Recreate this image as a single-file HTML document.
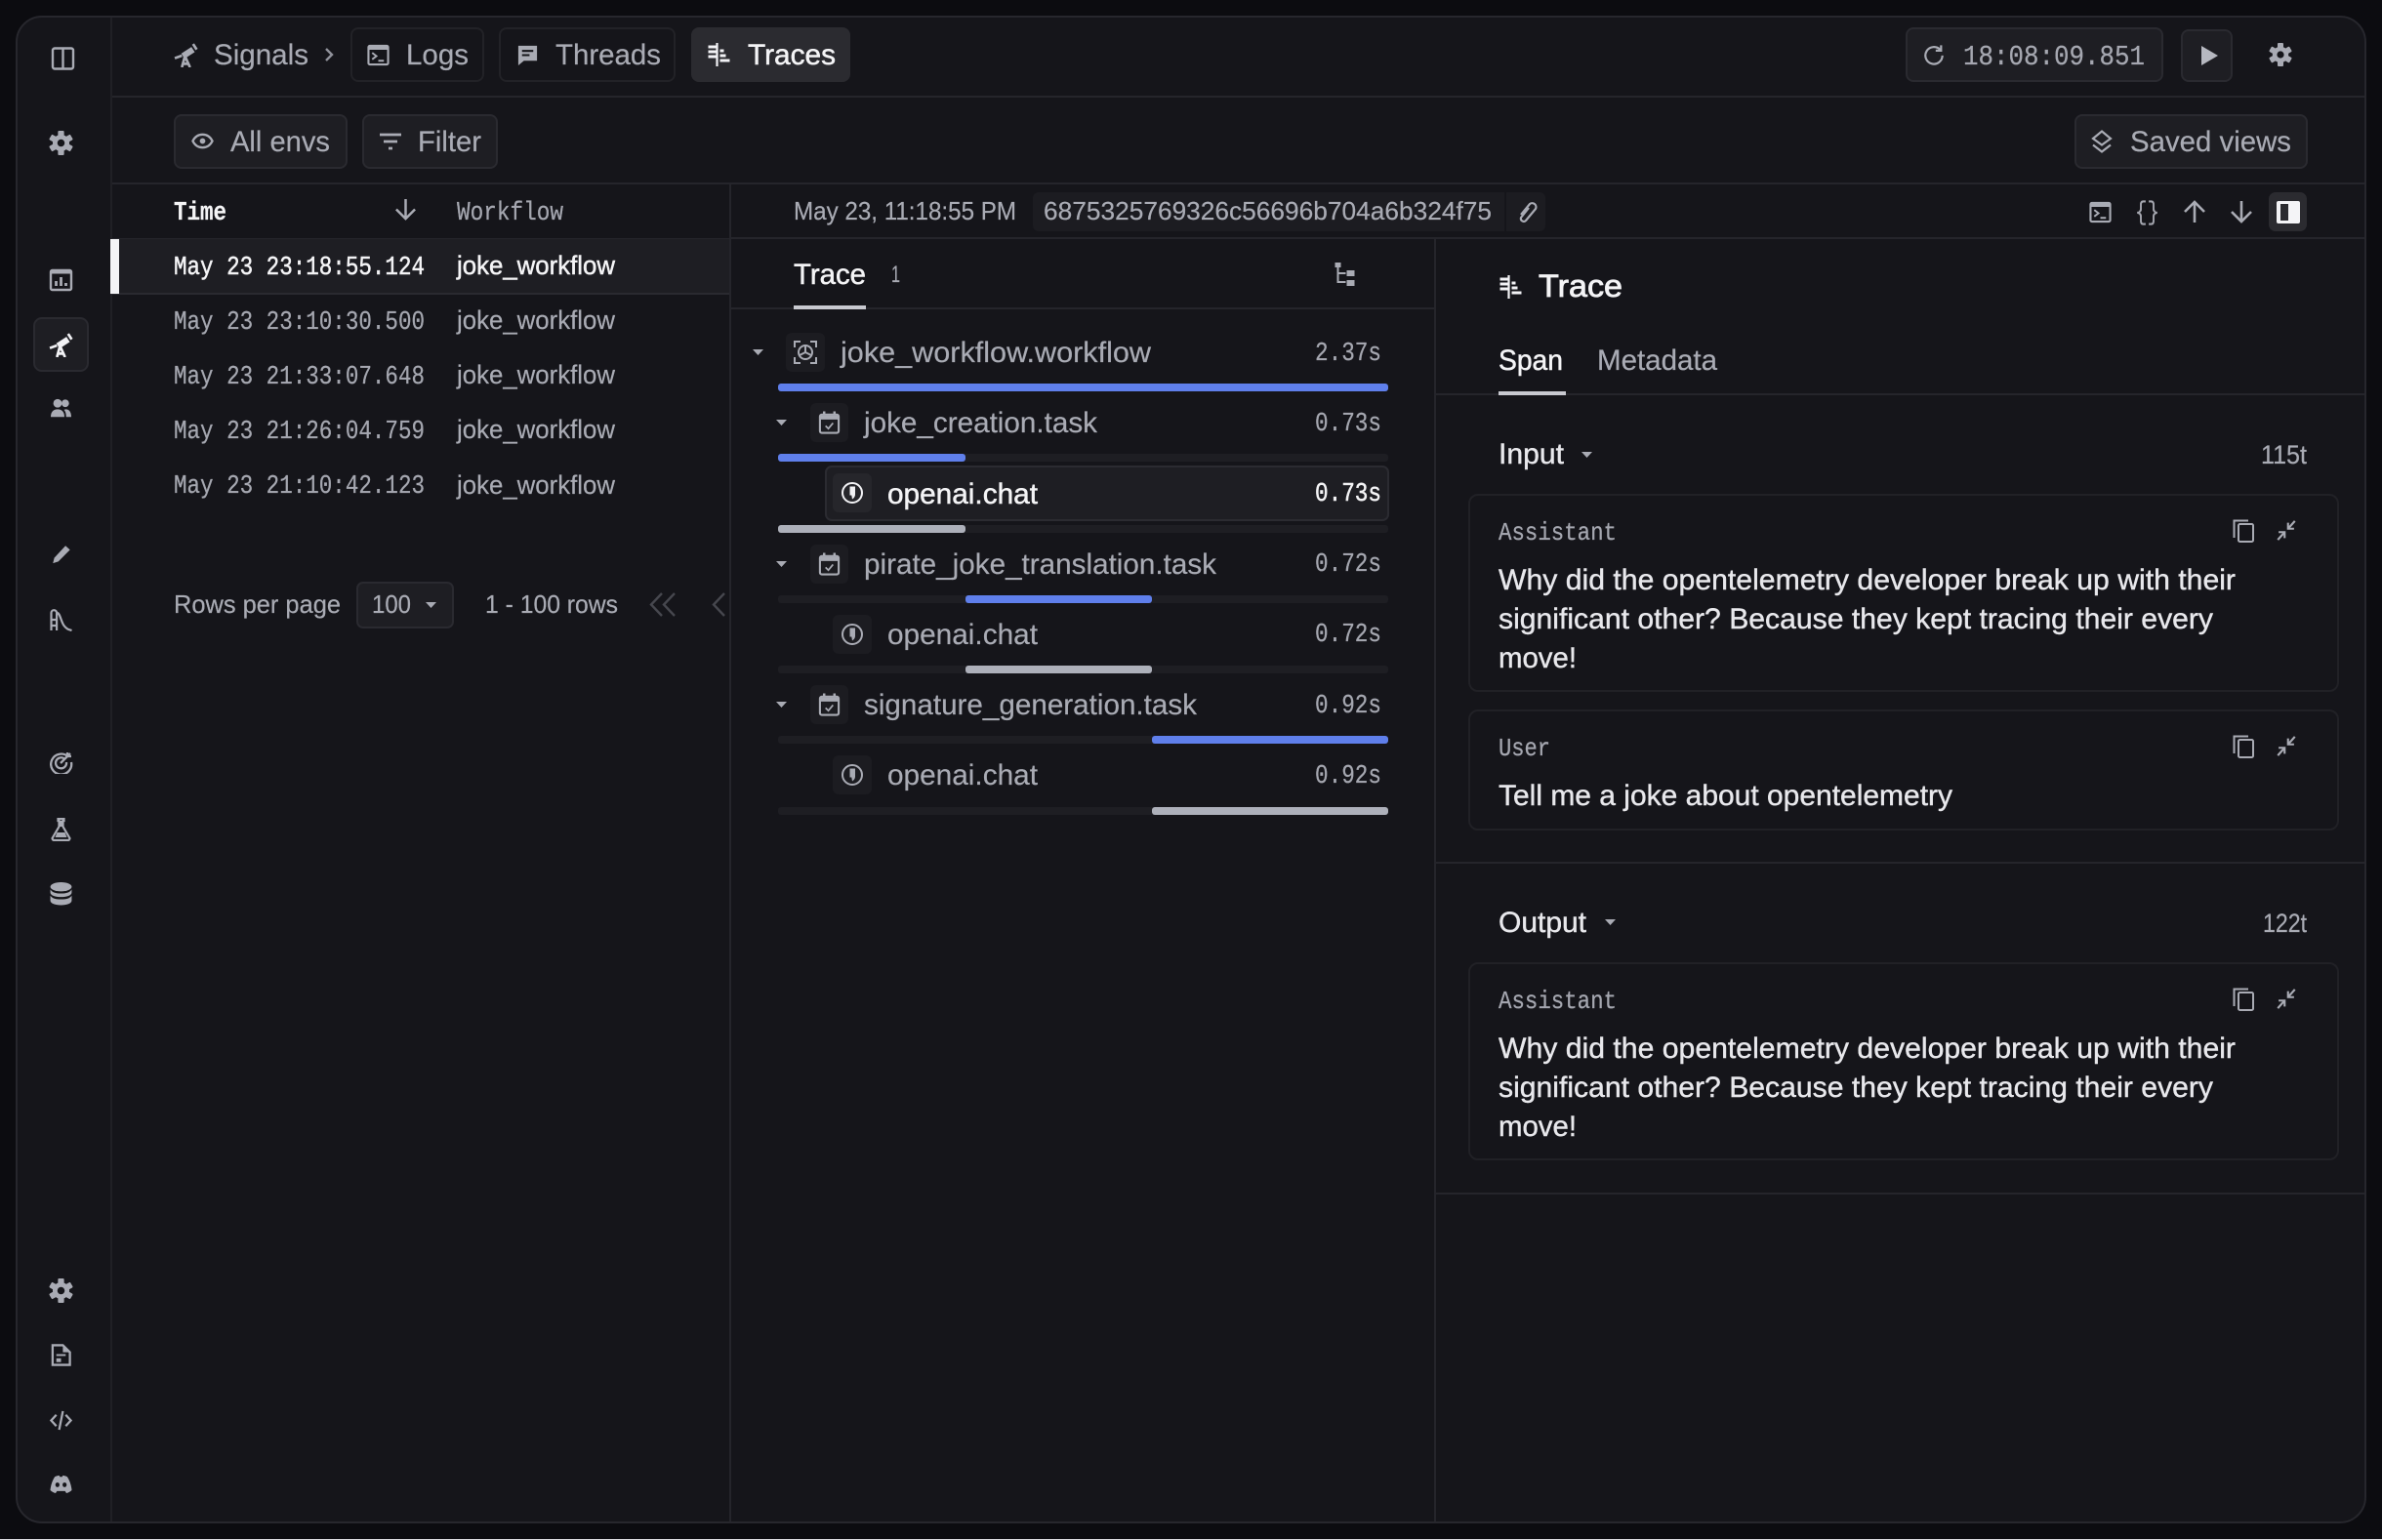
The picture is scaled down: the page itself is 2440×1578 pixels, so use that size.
<!DOCTYPE html>
<html lang="en">
<head>
<meta charset="utf-8">
<title>Traces</title>
<style>
html,body{margin:0;padding:0;background:#0c0c10;width:2440px;height:1578px;overflow:hidden}
svg{display:block}
text{white-space:pre}
.s{font-family:"Liberation Sans",sans-serif;font-size:30px;fill:#a9abb4;stroke:#a9abb4;stroke-width:.2px}
.m{font-family:"Liberation Mono",monospace;font-size:27px;fill:#a5a7b0;stroke:#a5a7b0;stroke-width:.25px}
.w{fill:#f4f4f6;stroke:#f4f4f6}
.s.w,.m.w{stroke:#f4f4f6}
.med{stroke:currentColor;stroke-width:.5px}
.msg{font-family:"Liberation Sans",sans-serif;font-size:30px;fill:#e8e8ec;stroke:#e8e8ec;stroke-width:.4px}
.ln{fill:#25252b}
.btn{fill:#1e1e23;stroke:#2a2a30;stroke-width:2}
.btn0{fill:#15151a;stroke:#222227;stroke-width:2}
.card{fill:#15151a;stroke:#212126;stroke-width:2}
.ic{fill:#1c1c21}
.trk{fill:#1e1e23}
.blu{fill:#5f7feb}
.gry{fill:#adb0ba}
.i{color:#a9abb4}
.iw{color:#f2f2f5}
</style>
</head>
<body>
<svg xmlns="http://www.w3.org/2000/svg" width="2440" height="1578" viewBox="0 0 2440 1578">
<defs>
<symbol id="gear" viewBox="0 0 24 24">
  <g fill="currentColor">
    <circle cx="12" cy="12" r="8.2"/>
    <rect x="9" y="0" width="6" height="5" rx="1"/>
    <rect x="9" y="19" width="6" height="5" rx="1"/>
    <rect x="9" y="0" width="6" height="5" rx="1" transform="rotate(60 12 12)"/>
    <rect x="9" y="19" width="6" height="5" rx="1" transform="rotate(60 12 12)"/>
    <rect x="9" y="0" width="6" height="5" rx="1" transform="rotate(120 12 12)"/>
    <rect x="9" y="19" width="6" height="5" rx="1" transform="rotate(120 12 12)"/>
  </g>
  <circle cx="12" cy="12" r="3.6" fill="#15151a"/>
</symbol>
<symbol id="panel" viewBox="0 0 24 24">
  <rect x="1.5" y="1.5" width="21" height="21" rx="2" fill="none" stroke="currentColor" stroke-width="2.4"/>
  <path d="M12 2v20" stroke="currentColor" stroke-width="2.4"/>
</symbol>
<symbol id="chart" viewBox="0 0 24 24">
  <rect x="1.5" y="2" width="21" height="20" rx="1.5" fill="none" stroke="currentColor" stroke-width="2.4"/>
  <path d="M2 4h20" stroke="currentColor" stroke-width="3"/>
  <path d="M7 18v-5M12 18V9M17 18v-3" stroke="currentColor" stroke-width="2.8"/>
</symbol>
<symbol id="scope" viewBox="0 0 24 24">
  <path d="M9 13 19 6.500" stroke="currentColor" stroke-width="6" fill="none"/>
  <path d="M19 1l3.500 5.500M1 15l7-2.500" stroke="currentColor" stroke-width="2.600" fill="none"/>
  <path d="M11 13 8 24M11 13l5 11M8.500 20.500h6" stroke="currentColor" stroke-width="2.600" fill="none"/>
</symbol>
<symbol id="people" viewBox="0 0 24 24" fill="currentColor">
  <circle cx="8" cy="6" r="5"/>
  <circle cx="17" cy="6" r="4.4"/>
  <path d="M0 22c0-6 3-9 8-9s8 3 8 9z"/>
  <path d="M17.500 13c4 0 6.500 3 6.500 9h-6c0-4-.500-6-2.500-8.500z"/>
</symbol>
<symbol id="pencil" viewBox="0 0 24 24">
  <path d="M3 22l1.500-6L17 2.500l5 4.500L9 20z" fill="currentColor"/>
</symbol>
<symbol id="ladder" viewBox="0 0 24 24">
  <path d="M2 23V5a2.800 2.800 0 0 1 5.600 0V23M2 12h5.600M2 18h5.600M8 5c3 0 4 9 7 13s5 4 8 5" fill="none" stroke="currentColor" stroke-width="2.200"/>
</symbol>
<symbol id="target" viewBox="0 0 24 24" fill="none" stroke="currentColor" stroke-width="2.300">
  <path d="M19 6.500A10.500 10.500 0 1 0 22 12"/>
  <path d="M15 8.500A5.500 5.500 0 1 0 17 12"/>
  <path d="M11 13 21 3M18 2v4h4"/>
</symbol>
<symbol id="flask" viewBox="0 0 24 24">
  <path d="M9 1h6v2h-1v6l7 12a2 2 0 0 1-2 2H5a2 2 0 0 1-2-2l7-12V3H9z" fill="none" stroke="currentColor" stroke-width="2.200"/>
  <path d="M8 15h8l2 5H6z" fill="currentColor"/>
  <path d="M10 3h4v6h-4z" fill="currentColor"/>
</symbol>
<symbol id="db" viewBox="0 0 24 24" fill="currentColor">
  <ellipse cx="12" cy="5.500" rx="10.500" ry="4.500"/>
  <path d="M1.500 8c2 3 5 4 10.500 4s8.500-1 10.500-4v3c0 3-5 4.500-10.500 4.500S1.500 14 1.500 11z"/>
  <path d="M1.500 14c2 3 5 3.800 10.500 3.800S20.500 17 22.500 14v5c0 3-5 4.500-10.500 4.500S1.500 22 1.500 19z"/>
</symbol>
<symbol id="doc" viewBox="0 0 24 24">
  <path d="M3 1.500h11l7.500 7.500v13.500H3z" fill="none" stroke="currentColor" stroke-width="2.400"/>
  <path d="M14 1.500V9h7.500z" fill="currentColor"/>
  <path d="M7 12h10" stroke="currentColor" stroke-width="2"/>
  <rect x="7" y="15.500" width="5" height="4" fill="currentColor"/>
</symbol>
<symbol id="code" viewBox="0 0 24 24" fill="none" stroke="currentColor" stroke-width="2.400">
  <path d="M7 6 1.500 12 7 18M17 6l5.500 6L17 18M14 2 10 22"/>
</symbol>
<symbol id="discord" viewBox="0 0 24 24">
  <path d="M5 3.500c2-1 4-1.500 5-1.500l.6 1.500h2.800L14 2c1 0 3 .5 5 1.500 2.500 4 4.500 9 5 15-1.500 1.500-4 3-6 3.300l-1.500-2.300H7.500L6 21.800c-2-.3-4.500-1.800-6-3.300.5-6 2.500-11 5-15z" fill="currentColor"/>
  <ellipse cx="8" cy="12.500" rx="2.300" ry="2.600" fill="#15151a"/>
  <ellipse cx="16" cy="12.500" rx="2.300" ry="2.600" fill="#15151a"/>
</symbol>
<symbol id="term" viewBox="0 0 24 24">
  <rect x="1.500" y="2" width="21" height="20" rx="1.500" fill="none" stroke="currentColor" stroke-width="2.200"/>
  <path d="M2 4.500h20" stroke="currentColor" stroke-width="3.400"/>
  <path d="M5.500 9.500 10 13l-4.500 3.500M12 18h6" fill="none" stroke="currentColor" stroke-width="2"/>
</symbol>
<symbol id="chat" viewBox="0 0 24 24">
  <path d="M2 2h20v16H8l-6 5z" fill="currentColor"/>
  <path d="M6 7.500h12M6 12h8" stroke="#15151a" stroke-width="2.200"/>
</symbol>
<symbol id="trace" viewBox="0 0 24 24">
  <path d="M10 0v24" stroke="currentColor" stroke-width="2.200"/>
  <path d="M1 4h9M1 9h9M1 14h9M13 8h4M13 13h6M13 18h10" stroke="currentColor" stroke-width="3" fill="none"/>
</symbol>
<symbol id="eye" viewBox="0 0 24 24">
  <path d="M1.500 12C4 7 8 5 12 5s8 2 10.500 7C20 17 16 19 12 19s-8-2-10.500-7z" fill="none" stroke="currentColor" stroke-width="2.400"/>
  <circle cx="12" cy="12" r="3" fill="currentColor"/>
</symbol>
<symbol id="filter" viewBox="0 0 24 24">
  <path d="M1 5h22M5 12h14M10 19h4" stroke="currentColor" stroke-width="2.800"/>
</symbol>
<symbol id="refresh" viewBox="0 0 24 24" fill="none" stroke="currentColor" stroke-width="2.400">
  <path d="M19 6.500A9.500 9.500 0 1 0 21.500 13"/>
  <path d="M20 1.500v6h-6" />
</symbol>
<symbol id="layers" viewBox="0 0 24 24" fill="none" stroke="currentColor" stroke-width="2.200">
  <path d="M12 1.500 21 9l-9 6.500L3 9z"/>
  <path d="M3 15.500l9 7 9-7"/>
</symbol>
<symbol id="link" viewBox="0 0 24 24" fill="none" stroke="currentColor" stroke-width="2.200">
  <path d="M6 14 15 3a4 4 0 0 1 6 5L11 20a3 3 0 0 1-5-3l8-10"/>
</symbol>
<symbol id="up" viewBox="0 0 24 24" fill="none" stroke="currentColor" stroke-width="2.600">
  <path d="M12 23V2M2 12 12 2l10 10"/>
</symbol>
<symbol id="down" viewBox="0 0 24 24" fill="none" stroke="currentColor" stroke-width="2.600">
  <path d="M12 1v21M2 12l10 10 10-10"/>
</symbol>
<symbol id="tree" viewBox="0 0 24 24">
  <rect x="2" y="0" width="6" height="5" fill="currentColor"/>
  <path d="M5 5v15h8M5 11h8" stroke="currentColor" stroke-width="2" fill="none"/>
  <rect x="14" y="8" width="8" height="6" fill="currentColor"/>
  <rect x="14" y="18" width="8" height="6" fill="currentColor"/>
</symbol>
<symbol id="wf" viewBox="0 0 24 24" fill="none" stroke="currentColor" stroke-width="2">
  <path d="M1 7V1h6M17 1h6v6M1 17v6h6M17 23h6v-6"/>
  <circle cx="12" cy="12" r="7"/>
  <path d="M12 12V5M12 12l-6 3M12 12l6 3"/>
</symbol>
<symbol id="task" viewBox="0 0 24 24">
  <rect x="2" y="3.500" width="20" height="19.500" rx="2" fill="none" stroke="currentColor" stroke-width="2.200"/>
  <path d="M2 6.500h20" stroke="currentColor" stroke-width="4.500"/>
  <path d="M6.500 0v4M17.500 0v4" stroke="currentColor" stroke-width="2.600"/>
  <path d="M8 15.500l3 3 5-6" fill="none" stroke="currentColor" stroke-width="1.800"/>
</symbol>
<symbol id="oai" viewBox="0 0 24 24">
  <circle cx="12" cy="12" r="10" fill="none" stroke="currentColor" stroke-width="2"/>
  <path d="M9.500 5.500h5.500v8c0 2.500-1.500 4-3 5l-.7-4H9.500z" fill="currentColor"/>
</symbol>
<symbol id="copy" viewBox="0 0 22 24" fill="none" stroke="currentColor" stroke-width="2">
  <rect x="6" y="5" width="15" height="18" rx="1.500"/>
  <path d="M1.500 19V1.500H16"/>
</symbol>
<symbol id="shrink" viewBox="0 0 24 24" fill="none" stroke="currentColor" stroke-width="2.400">
  <path d="M22 1 14 10M14 3v7h7M2 23l8-9M10 21v-7H3"/>
</symbol>
<path id="caret" d="M0 0h11l-5.500 6z" fill="#a9abb4"/>
</defs>

<rect width="2440" height="1578" fill="#0c0c10"/>
<rect x="0" y="1577" width="2440" height="1" fill="#dcdce0"/>

<!-- main panel -->
<rect x="17" y="17" width="2406" height="1543" rx="26" fill="#15151a" stroke="#27272d" stroke-width="2"/>
<rect class="ln" x="113" y="18" width="2" height="1541" opacity=".7"/>
<rect class="ln" x="115" y="98" width="2307" height="2"/>
<rect class="ln" x="115" y="187" width="2307" height="2"/>
<rect class="ln" x="747" y="189" width="2" height="1370"/>
<rect class="ln" x="749" y="243" width="1673" height="2"/>
<rect class="ln" x="115" y="244" width="632" height="2"/>
<rect class="ln" x="1469" y="245" width="2" height="1314"/>
<rect class="ln" x="749" y="315" width="720" height="2"/>
<rect class="ln" x="1471" y="403" width="951" height="2"/>
<rect class="ln" x="1471" y="883" width="951" height="2"/>
<rect class="ln" x="1471" y="1222" width="951" height="2"/>

<!-- sidebar -->
<use class="i" href="#panel" x="52" y="48" width="25" height="24"/>
<use class="i" href="#gear" x="50" y="134" width="25" height="25"/>
<use class="i" href="#chart" x="50" y="275" width="25" height="24"/>
<rect class="btn" x="35" y="326" width="55" height="54" rx="8"/>
<use class="iw" href="#scope" x="50" y="341" width="25" height="25"/>
<use class="i" href="#people" x="50" y="408" width="25" height="21"/>
<use class="i" href="#pencil" x="51" y="557" width="23" height="22"/>
<use class="i" href="#ladder" x="50" y="623" width="25" height="24"/>
<use class="i" href="#target" x="51" y="769" width="24" height="24"/>
<use class="i" href="#flask" x="50" y="838" width="25" height="24"/>
<use class="i" href="#db" x="50" y="903" width="25" height="25"/>
<use class="i" href="#gear" x="50" y="1310" width="25" height="25"/>
<use class="i" href="#doc" x="51" y="1376" width="23" height="25"/>
<use class="i" href="#code" x="50" y="1444" width="25" height="23"/>
<use class="i" href="#discord" x="50" y="1510" width="25" height="22"/>

<!-- top bar -->
<use class="i" href="#scope" x="178" y="44" width="25" height="25"/>
<text class="s" x="219" y="66" textLength="97" lengthAdjust="spacingAndGlyphs">Signals</text>
<path d="M334 50l6 6-6 6" fill="none" stroke="#8f919a" stroke-width="2.400"/>
<rect class="btn0" x="360" y="29" width="135" height="54" rx="7"/>
<use class="i" href="#term" x="376" y="45" width="23" height="23"/>
<text class="s" x="416" y="66" textLength="64" lengthAdjust="spacingAndGlyphs">Logs</text>
<rect class="btn0" x="512" y="29" width="179" height="54" rx="7"/>
<use class="i" href="#chat" x="529" y="45" width="23" height="23"/>
<text class="s" x="569" y="66" textLength="108" lengthAdjust="spacingAndGlyphs">Threads</text>
<rect x="708" y="28" width="163" height="56" rx="8" fill="#2b2b30"/>
<use class="iw" href="#trace" x="724" y="44" width="25" height="24"/>
<text class="s w med" x="766" y="66" textLength="90" lengthAdjust="spacingAndGlyphs" style="color:#f4f4f6">Traces</text>

<rect class="btn" x="1953" y="29" width="262" height="54" rx="7"/>
<use class="i" href="#refresh" x="1970" y="45" width="22" height="22"/>
<text class="m" x="2011" y="66" style="font-size:29px" textLength="186" lengthAdjust="spacingAndGlyphs">18:08:09.851</text>
<rect class="btn" x="2235" y="31" width="51" height="52" rx="7"/>
<path d="M2255 47l17 10-17 10z" fill="#b6b8c0"/>
<use class="i" href="#gear" x="2324" y="44" width="24" height="24"/>

<!-- filter bar -->
<rect class="btn" x="179" y="118" width="176" height="54" rx="7"/>
<use class="i" href="#eye" x="196" y="133" width="23" height="23"/>
<text class="s" x="236" y="155" textLength="102" lengthAdjust="spacingAndGlyphs">All envs</text>
<rect class="btn" x="372" y="118" width="137" height="54" rx="7"/>
<use class="i" href="#filter" x="388" y="133" width="24" height="24"/>
<text class="s" x="428" y="155" textLength="65" lengthAdjust="spacingAndGlyphs">Filter</text>
<rect class="btn" x="2126" y="118" width="237" height="54" rx="7"/>
<use class="i" href="#layers" x="2141" y="133" width="24" height="24"/>
<text class="s" x="2182" y="155" textLength="165" lengthAdjust="spacingAndGlyphs">Saved views</text>

<!-- table -->
<text class="m w" x="178" y="225" style="font-weight:bold" textLength="54" lengthAdjust="spacingAndGlyphs">Time</text>
<use class="i" href="#down" x="404" y="203" width="23" height="23"/>
<text class="m" x="468" y="225" textLength="109" lengthAdjust="spacingAndGlyphs">Workflow</text>

<rect x="113" y="245" width="634" height="56" fill="#1e1e23"/>
<rect x="113" y="300" width="634" height="2" fill="#2a2a30"/>
<rect x="113" y="245" width="9" height="56" fill="#f4f4f6"/>
<text class="m w med" x="178" y="281" textLength="257" lengthAdjust="spacingAndGlyphs" style="color:#f4f4f6">May 23 23:18:55.124</text>
<text class="s w med" x="468" y="281" style="font-size:27px;color:#f4f4f6" textLength="162" lengthAdjust="spacingAndGlyphs">joke_workflow</text>

<text class="m" x="178" y="337" textLength="257" lengthAdjust="spacingAndGlyphs">May 23 23:10:30.500</text>
<text class="s" x="468" y="337" style="font-size:27px" textLength="162" lengthAdjust="spacingAndGlyphs">joke_workflow</text>
<text class="m" x="178" y="393" textLength="257" lengthAdjust="spacingAndGlyphs">May 23 21:33:07.648</text>
<text class="s" x="468" y="393" style="font-size:27px" textLength="162" lengthAdjust="spacingAndGlyphs">joke_workflow</text>
<text class="m" x="178" y="449" textLength="257" lengthAdjust="spacingAndGlyphs">May 23 21:26:04.759</text>
<text class="s" x="468" y="449" style="font-size:27px" textLength="162" lengthAdjust="spacingAndGlyphs">joke_workflow</text>
<text class="m" x="178" y="505" textLength="257" lengthAdjust="spacingAndGlyphs">May 23 21:10:42.123</text>
<text class="s" x="468" y="506" style="font-size:27px" textLength="162" lengthAdjust="spacingAndGlyphs">joke_workflow</text>

<!-- pagination -->
<text class="s" x="178" y="628" style="font-size:26px" textLength="171" lengthAdjust="spacingAndGlyphs">Rows per page</text>
<rect class="btn" x="366" y="597" width="98" height="46" rx="6"/>
<text class="s" x="381" y="628" style="font-size:26px" textLength="40" lengthAdjust="spacingAndGlyphs">100</text>
<use href="#caret" x="436" y="617"/>
<text class="s" x="497" y="628" style="font-size:26px" textLength="136" lengthAdjust="spacingAndGlyphs">1 - 100 rows</text>
<path d="M678 608l-11 11.500 11 11.500M691 608l-11 11.500 11 11.500M742 608l-11 11.500 11 11.500" fill="none" stroke="#46474e" stroke-width="2.400"/>

<!-- detail header -->
<text class="s" x="813" y="225" style="font-size:26px" textLength="228" lengthAdjust="spacingAndGlyphs">May 23, 11:18:55 PM</text>
<rect x="1058" y="197" width="525" height="40" rx="6" fill="#1c1c21"/>
<rect x="1541" y="197" width="2" height="40" fill="#15151a"/>
<text class="s" x="1069" y="225" style="font-size:26px" textLength="459" lengthAdjust="spacingAndGlyphs">6875325769326c56696b704a6b324f75</text>
<use class="i" href="#link" x="1552" y="206" width="24" height="24"/>
<use class="i" href="#term" x="2140" y="206" width="23" height="23"/>
<text class="m" x="2187" y="225" style="font-size:27px" textLength="25" lengthAdjust="spacingAndGlyphs">{}</text>
<use class="i" href="#up" x="2236" y="205" width="24" height="24"/>
<use class="i" href="#down" x="2284" y="205" width="24" height="24"/>
<rect x="2324" y="197" width="39" height="40" rx="7" fill="#2b2b30"/>
<rect x="2332" y="206" width="24" height="23" rx="2" fill="#f4f4f7"/>
<rect x="2336" y="209" width="8" height="17" fill="#2b2b30"/>

<!-- trace tree -->
<text class="s w med" x="813" y="291" style="color:#f4f4f6" textLength="74" lengthAdjust="spacingAndGlyphs">Trace</text>
<text class="s" x="913" y="289" style="font-size:24px" textLength="9" lengthAdjust="spacingAndGlyphs">1</text>
<rect x="813" y="313" width="74" height="4" fill="#c8c9d0"/>
<use class="i" href="#tree" x="1365" y="269" width="25" height="24"/>

<!-- row 1 -->
<use href="#caret" x="771" y="358"/>
<rect class="ic" x="805" y="341" width="40" height="40" rx="6"/>
<use class="i" href="#wf" x="813" y="349" width="24" height="24"/>
<text class="s" x="861" y="371" textLength="318" lengthAdjust="spacingAndGlyphs">joke_workflow.workflow</text>
<text class="m" x="1347" y="369" textLength="68" lengthAdjust="spacingAndGlyphs">2.37s</text>
<rect class="blu" x="797" y="393" width="625" height="8" rx="3"/>

<!-- row 2 -->
<use href="#caret" x="795" y="430"/>
<rect class="ic" x="830" y="413" width="39" height="40" rx="6"/>
<use class="i" href="#task" x="838" y="421" width="23" height="24"/>
<text class="s" x="885" y="443" textLength="239" lengthAdjust="spacingAndGlyphs">joke_creation.task</text>
<text class="m" x="1347" y="441" textLength="68" lengthAdjust="spacingAndGlyphs">0.73s</text>
<rect class="trk" x="797" y="465" width="625" height="8" rx="3"/>
<rect class="blu" x="797" y="465" width="192" height="8" rx="3"/>

<!-- row 3 selected -->
<rect x="846" y="478" width="576" height="55" rx="6" fill="#1e1e23" stroke="#2b2b31" stroke-width="2"/>
<rect x="853" y="485" width="40" height="40" rx="6" fill="#26262b"/>
<use class="iw" href="#oai" x="861" y="493" width="24" height="24"/>
<text class="s w med" x="909" y="516" textLength="154" lengthAdjust="spacingAndGlyphs" style="color:#f4f4f6">openai.chat</text>
<text class="m w med" x="1347" y="513" textLength="68" lengthAdjust="spacingAndGlyphs" style="color:#f4f4f6">0.73s</text>
<rect class="trk" x="797" y="538" width="625" height="8" rx="3"/>
<rect class="gry" x="797" y="538" width="192" height="8" rx="3"/>

<!-- row 4 -->
<use href="#caret" x="795" y="575"/>
<rect class="ic" x="830" y="558" width="39" height="40" rx="6"/>
<use class="i" href="#task" x="838" y="566" width="23" height="24"/>
<text class="s" x="885" y="588" textLength="361" lengthAdjust="spacingAndGlyphs">pirate_joke_translation.task</text>
<text class="m" x="1347" y="585" textLength="68" lengthAdjust="spacingAndGlyphs">0.72s</text>
<rect class="trk" x="797" y="610" width="625" height="8" rx="3"/>
<rect class="blu" x="989" y="610" width="191" height="8" rx="3"/>

<!-- row 5 -->
<rect class="ic" x="853" y="630" width="40" height="40" rx="6"/>
<use class="i" href="#oai" x="861" y="638" width="24" height="24"/>
<text class="s" x="909" y="660" textLength="154" lengthAdjust="spacingAndGlyphs">openai.chat</text>
<text class="m" x="1347" y="657" textLength="68" lengthAdjust="spacingAndGlyphs">0.72s</text>
<rect class="trk" x="797" y="682" width="625" height="8" rx="3"/>
<rect class="gry" x="989" y="682" width="191" height="8" rx="3"/>

<!-- row 6 -->
<use href="#caret" x="795" y="719"/>
<rect class="ic" x="830" y="702" width="39" height="40" rx="6"/>
<use class="i" href="#task" x="838" y="710" width="23" height="24"/>
<text class="s" x="885" y="732" textLength="341" lengthAdjust="spacingAndGlyphs">signature_generation.task</text>
<text class="m" x="1347" y="730" textLength="68" lengthAdjust="spacingAndGlyphs">0.92s</text>
<rect class="trk" x="797" y="754" width="625" height="8" rx="3"/>
<rect class="blu" x="1180" y="754" width="242" height="8" rx="3"/>

<!-- row 7 -->
<rect class="ic" x="853" y="774" width="40" height="40" rx="6"/>
<use class="i" href="#oai" x="861" y="782" width="24" height="24"/>
<text class="s" x="909" y="804" textLength="154" lengthAdjust="spacingAndGlyphs">openai.chat</text>
<text class="m" x="1347" y="802" textLength="68" lengthAdjust="spacingAndGlyphs">0.92s</text>
<rect class="trk" x="797" y="827" width="625" height="8" rx="3"/>
<rect class="gry" x="1180" y="827" width="242" height="8" rx="3"/>

<!-- right pane -->
<use class="iw" href="#trace" x="1535" y="282" width="25" height="24"/>
<text class="s w med" x="1576" y="304" style="font-size:32px;stroke-width:.8px;color:#f4f4f6" textLength="86" lengthAdjust="spacingAndGlyphs">Trace</text>
<text class="s w med" x="1535" y="379" style="color:#f4f4f6" textLength="66" lengthAdjust="spacingAndGlyphs">Span</text>
<text class="s" x="1636" y="379" textLength="123" lengthAdjust="spacingAndGlyphs">Metadata</text>
<rect x="1535" y="401" width="69" height="4" fill="#c8c9d0"/>

<text class="msg" x="1535" y="475" textLength="67" lengthAdjust="spacingAndGlyphs">Input</text>
<use href="#caret" x="1620" y="463"/>
<text class="s" x="2316" y="475" style="font-size:27px" textLength="47" lengthAdjust="spacingAndGlyphs">115t</text>

<rect class="card" x="1505" y="507" width="890" height="201" rx="9"/>
<text class="m" x="1535" y="553" style="font-size:26px" textLength="121" lengthAdjust="spacingAndGlyphs">Assistant</text>
<use class="i" href="#copy" x="2287" y="532" width="22" height="24"/>
<use class="i" href="#shrink" x="2331" y="533" width="22" height="21"/>
<text class="msg" x="1535" y="604" textLength="755" lengthAdjust="spacingAndGlyphs">Why did the opentelemetry developer break up with their</text>
<text class="msg" x="1535" y="644" textLength="732" lengthAdjust="spacingAndGlyphs">significant other? Because they kept tracing their every</text>
<text class="msg" x="1535" y="684" textLength="80" lengthAdjust="spacingAndGlyphs">move!</text>

<rect class="card" x="1505" y="728" width="890" height="122" rx="9"/>
<text class="m" x="1535" y="774" style="font-size:26px" textLength="53" lengthAdjust="spacingAndGlyphs">User</text>
<use class="i" href="#copy" x="2287" y="753" width="22" height="24"/>
<use class="i" href="#shrink" x="2331" y="754" width="22" height="21"/>
<text class="msg" x="1535" y="825" textLength="465" lengthAdjust="spacingAndGlyphs">Tell me a joke about opentelemetry</text>

<text class="msg" x="1535" y="955" textLength="90" lengthAdjust="spacingAndGlyphs">Output</text>
<use href="#caret" x="1644" y="942"/>
<text class="s" x="2318" y="955" style="font-size:27px" textLength="45" lengthAdjust="spacingAndGlyphs">122t</text>

<rect class="card" x="1505" y="987" width="890" height="201" rx="9"/>
<text class="m" x="1535" y="1033" style="font-size:26px" textLength="121" lengthAdjust="spacingAndGlyphs">Assistant</text>
<use class="i" href="#copy" x="2287" y="1012" width="22" height="24"/>
<use class="i" href="#shrink" x="2331" y="1013" width="22" height="21"/>
<text class="msg" x="1535" y="1084" textLength="755" lengthAdjust="spacingAndGlyphs">Why did the opentelemetry developer break up with their</text>
<text class="msg" x="1535" y="1124" textLength="732" lengthAdjust="spacingAndGlyphs">significant other? Because they kept tracing their every</text>
<text class="msg" x="1535" y="1164" textLength="80" lengthAdjust="spacingAndGlyphs">move!</text>
</svg>
</body>
</html>
